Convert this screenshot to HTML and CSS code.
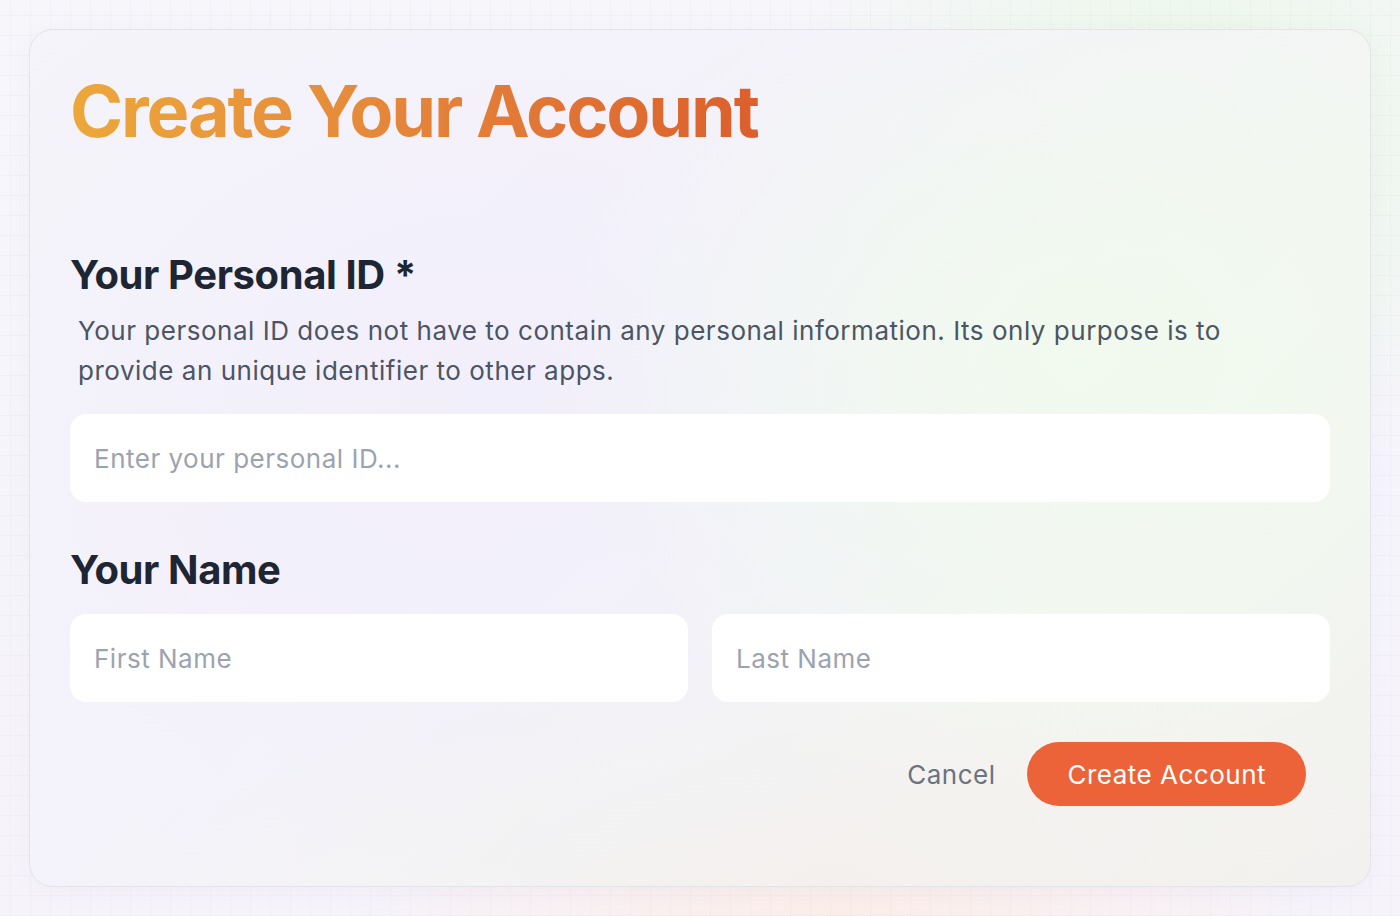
FILE: index.html
```html
<!DOCTYPE html>
<html lang="en">
<head>
<meta charset="utf-8">
<title>Create Your Account</title>
<link rel="stylesheet" href="styles.css">
</head>
<body>
<div class="page">
  <form class="card">
    <h1 class="title">Create Your Account</h1>

    <section class="field id-field">
      <h2 class="label">Your Personal ID *</h2>
      <p class="help">Your personal ID does not have to contain any personal information. Its only purpose is to provide an unique identifier to other apps.</p>
      <input class="input" type="text" placeholder="Enter your personal ID...">
    </section>

    <section class="field name-field">
      <h2 class="label">Your Name</h2>
      <div class="name-row">
        <input class="input" type="text" placeholder="First Name">
        <input class="input" type="text" placeholder="Last Name">
      </div>
    </section>

    <div class="actions">
      <button type="button" class="btn-cancel">Cancel</button>
      <button type="button" class="btn-primary">Create Account</button>
    </div>
  </form>
</div>
</body>
</html>
```

FILE: styles.css
```css
* { box-sizing: border-box; }

html, body {
  margin: 0;
  height: 100%;
}

body {
  font-family: Inter, "Noto Sans", "Liberation Sans", sans-serif;
  background-color: #f8f7fb;
  background-image:
    linear-gradient(rgba(120, 120, 150, 0.045) 1px, transparent 1px),
    linear-gradient(90deg, rgba(120, 120, 150, 0.045) 1px, transparent 1px),
    radial-gradient(ellipse 600px 500px at 85% 15%, rgba(232, 248, 228, 0.9), transparent 70%),
    radial-gradient(ellipse 700px 300px at 60% 100%, rgba(252, 236, 230, 0.9), transparent 70%),
    linear-gradient(180deg, #f7f6fb, #f6f3fb);
  background-size: 20px 20px, 20px 20px, 100% 100%, 100% 100%, 100% 100%;
  background-position: 10px 15px, 10px 15px, 0 0, 0 0, 0 0;
}

.page {
  height: 100%;
  padding: 29px;
  display: flex;
}

.card {
  flex: 1;
  display: flex;
  flex-direction: column;
  border: 1px solid #e3e3ea;
  border-radius: 24px;
  padding: 41px 40px 40px 40px;
  background-color: #f5f4f9;
  background-image:
    radial-gradient(ellipse 520px 420px at 78% 38%, rgba(241, 250, 238, 1), rgba(241, 250, 238, 0) 100%),
    radial-gradient(ellipse 700px 520px at 35% 45%, rgba(242, 239, 252, 1), rgba(242, 239, 252, 0) 100%),
    radial-gradient(ellipse 600px 260px at 60% 100%, rgba(244, 240, 238, 1), rgba(244, 240, 238, 0) 100%),
    linear-gradient(135deg, #f5f4f9 0%, #f4f2fa 40%, #f3f7f1 70%, #f2f1ef 100%);
  box-shadow: 0 4px 24px rgba(80, 80, 110, 0.04);
}

.title {
  margin: 0;
  font-size: 72px;
  line-height: 80px;
  font-weight: 700;
  letter-spacing: -0.03em;
  background: linear-gradient(90deg, #eca83b 0%, #e4843a 50%, #dc5f2c 100%);
  -webkit-background-clip: text;
  background-clip: text;
  color: transparent;
  align-self: flex-start;
}

.field {
  display: flex;
  flex-direction: column;
}

.id-field {
  margin-top: 100px;
}

.name-field {
  margin-top: 44px;
}

.label {
  margin: 0;
  font-size: 40px;
  line-height: 48px;
  font-weight: 700;
  color: #1f2633;
  letter-spacing: -0.01em;
}

.help {
  margin: 12px 0 0 8px;
  font-size: 26px;
  line-height: 40px;
  letter-spacing: 0.52px;
  color: #4b5563;
  max-width: 1200px;
}

.id-field .input {
  margin-top: 23px;
}

.input {
  display: block;
  width: 100%;
  height: 88px;
  border: none;
  outline: none;
  border-radius: 16px;
  background: #ffffff;
  padding: 0 24px;
  font-family: inherit;
  font-size: 26px;
  letter-spacing: 0.5px;
  color: #1f2633;
}

.input::placeholder {
  color: #9ca3af;
}

.name-row {
  margin-top: 20px;
  display: grid;
  grid-template-columns: 1fr 1fr;
  gap: 24px;
}

.actions {
  margin-top: 40px;
  display: flex;
  justify-content: flex-end;
  align-items: center;
  gap: 16px;
  padding-right: 24px;
}

.btn-cancel {
  border: none;
  background: transparent;
  font-family: inherit;
  font-size: 26px;
  letter-spacing: 0.5px;
  color: #6b7280;
  padding: 0 16px;
  height: 64px;
}

.btn-primary {
  border: none;
  background: #ec6339;
  color: #ffffff;
  font-family: inherit;
  font-size: 26px;
  letter-spacing: 0.5px;
  height: 64px;
  padding: 0 40px;
  border-radius: 32px;
}
```
